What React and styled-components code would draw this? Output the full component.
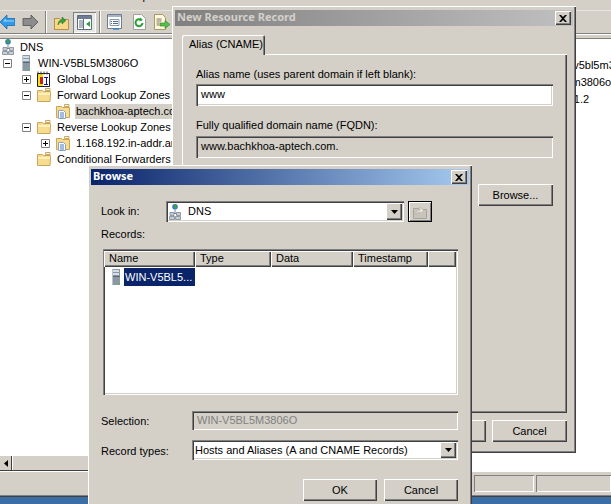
import React from "react";
import styled, { createGlobalStyle, css } from "styled-components";

const Global = createGlobalStyle`
  html, body { margin: 0; padding: 0; background: #d4d0c8; }
  * { box-sizing: border-box; }
`;

const raised = css`
  box-shadow: inset 1px 1px 0 #fff, inset -1px -1px 0 #404040, inset -2px -2px 0 #808080;
`;
const sunken = css`
  box-shadow: inset 1px 1px 0 #808080, inset 2px 2px 0 #404040, inset -1px -1px 0 #fff, inset -2px -2px 0 #d4d0c8;
`;

const Screen = styled.div`
  position: relative;
  width: 611px;
  height: 504px;
  overflow: hidden;
  background: #d4d0c8;
  color: #000;
  font: 11px/13px "Liberation Sans", Arial, sans-serif;
  display: flex;
  flex-direction: column;
`;

const MenuBar = styled.div`
  height: 5px;
  overflow: hidden;
  display: flex;
  align-items: flex-end;
  gap: 17px;
  padding-left: 3px;
  color: #000;
`;
const MenuItem = styled.span`
  flex: none;
  line-height: 16px;
  margin-bottom: 1px;
`;

const Toolbar = styled.div`
  height: 24px;
  margin-top: 5px;
  border-top: 1px solid #e8e6e0;
  border-bottom: 1px solid #808080;
  box-shadow: 0 1px 0 #fff;
  display: flex;
  align-items: center;
  position: relative;
`;
const ToolIcon = styled.svg`
  flex: none;
  display: block;
  margin-left: ${(p) => p.$ml}px;
`;
const ToolSep = styled.div`
  flex: none;
  width: 2px;
  height: 22px;
  margin-left: ${(p) => p.$ml}px;
  background: linear-gradient(90deg, #808080 50%, #fff 50%);
`;
const ToggleButton = styled.div`
  flex: none;
  width: 23px;
  height: 21px;
  margin-left: 4px;
  background: #e9e7e2;
  box-shadow: inset 1px 1px 0 #808080, inset -1px -1px 0 #fff;
  display: flex;
  align-items: center;
  justify-content: center;
`;

const Panes = styled.div`
  height: 433px;
  margin-top: 4px;
  background: #fff;
  box-shadow: inset 0 1px 0 #808080;
  display: flex;
  overflow: hidden;
`;
const TreePane = styled.div`
  width: 480px;
  flex: none;
  padding-top: 1px;
`;
const DetailPane = styled.div`
  flex: 1;
  padding-top: 19px;
  min-width: 0;
  overflow: hidden;
`;
const DetailRow = styled.div`
  height: 17px;
  line-height: 17px;
  white-space: nowrap;
  padding-left: ${(p) => p.$pad}px;
`;

const TreeRow = styled.div`
  height: 16px;
  display: flex;
  align-items: center;
  white-space: nowrap;
  padding-left: ${(p) => (p.$level < 0 ? 2 : 3 + p.$level * 19)}px;
`;
const ExpanderSlot = styled.span`
  flex: none;
  width: 9px;
  height: 9px;
  margin-right: 5px;
`;
const ExpanderBox = styled.svg`
  display: block;
`;
const NodeIcon = styled.svg`
  flex: none;
  display: block;
`;
const NodeLabel = styled.span`
  margin-left: ${(p) => (p.$level < 0 ? 1 : 4)}px;
  padding: 1px 1px;
  background: ${(p) => (p.$active ? "#d4d0c8" : "transparent")};
`;

const ScrollBar = styled.div`
  height: 16px;
  margin-top: -16px;
  position: relative;
  background: #d4d0c8;
  border-top: 1px solid #fff;
  border-bottom: 1px solid #404040;
  width: 88px;
  display: flex;
`;
const ScrollArrow = styled.div`
  width: 11px;
  flex: none;
  box-shadow: 1px 0 0 #404040, 2px 0 0 #fff;
  display: flex;
  align-items: center;
  justify-content: center;
`;

const StatusBar = styled.div`
  height: 24px;
  border-top: 1px solid #fff;
  padding-top: 3px;
  display: flex;
  gap: 2px;
  justify-content: flex-end;
  box-shadow: 0 1px 0 #808080;
`;
const StatusCell = styled.div`
  height: 17px;
  width: ${(p) => p.$w}px;
  flex: none;
  box-shadow: inset 1px 1px 0 #808080, inset -1px -1px 0 #fff;
`;
const Taskbar = styled.div`
  flex: 1;
  background: #3a6ea5;
  border-top: 1px solid #404040;
  margin-top: 1px;
`;

const Dialog = styled.div`
  position: absolute;
  left: ${(p) => p.$x}px;
  top: ${(p) => p.$y}px;
  width: ${(p) => p.$w}px;
  height: ${(p) => p.$h}px;
  background: #d4d0c8;
  padding: 4px 3px 3px;
  box-shadow: inset 1px 1px 0 #fff, inset -1px -1px 0 #404040, inset -2px -2px 0 #808080;
`;
const TitleBar = styled.div`
  height: 16px;
  padding: 0 2px;
  display: flex;
  align-items: center;
  justify-content: space-between;
  color: ${(p) => (p.$active ? "#fff" : "#d4d0c8")};
  font-family: "Noto Sans", Tahoma, sans-serif;
  font-weight: 700;
  font-size: 11px;
  background: ${(p) =>
    p.$active
      ? "linear-gradient(90deg, #0a246a, #a6caf0)"
      : "linear-gradient(90deg, #808080, #c0c0c0)"};
`;
const TitleText = styled.span`
  margin-bottom: 3px;
`;
const CloseButton = styled.div`
  width: 16px;
  height: 14px;
  background: #d4d0c8;
  ${raised}
  display: flex;
  align-items: center;
  justify-content: center;
`;

const RecordBody = styled.div`
  padding: 9px 6px 0 7px;
`;
const Tab = styled.div`
  width: 83px;
  height: 20px;
  padding: 3px 0 0 7px;
  position: relative;
  z-index: 1;
  background: #d4d0c8;
  box-shadow: inset 1px 1px 0 #fff, inset -1px 0 0 #404040, inset -2px 0 0 #808080;
  border-radius: 2px 2px 0 0;
  margin-bottom: -1px;
`;
const TabPanel = styled.div`
  height: 359px;
  padding: 14px 14px 0;
  ${raised}
  display: flex;
  flex-direction: column;
`;
const FieldLabel = styled.div`
  height: 13px;
  margin-top: ${(p) => p.$mt || 0}px;
  margin-bottom: ${(p) => p.$mb || 0}px;
`;
const TextBox = styled.div`
  height: 22px;
  padding: 0 5px 2px;
  display: flex;
  align-items: center;
  background: ${(p) => (p.$readonly ? "#d4d0c8" : "#fff")};
  ${sunken}
`;
const Button = styled.div`
  width: ${(p) => p.$w || 75}px;
  height: 22px;
  flex: none;
  background: #d4d0c8;
  ${raised}
  display: flex;
  align-items: center;
  justify-content: center;
`;
const BrowseRow = styled.div`
  margin-top: 26px;
  display: flex;
  justify-content: flex-end;
`;
const DialogButtons = styled.div`
  margin-top: ${(p) => p.$mt}px;
  display: flex;
  justify-content: flex-end;
  gap: ${(p) => p.$gap}px;
`;

const BrowseBody = styled.div`
  padding: 16px 11px 0 10px;
`;
const LookRow = styled.div`
  display: flex;
  align-items: center;
  height: 21px;
`;
const RowLabel = styled.div`
  width: ${(p) => p.$w}px;
  flex: none;
  padding-top: ${(p) => p.$pt || 0}px;
`;
const Combo = styled.div`
  flex: ${(p) => (p.$w ? "none" : "1")};
  width: ${(p) => (p.$w ? `${p.$w}px` : "auto")};
  height: ${(p) => p.$h}px;
  background: #fff;
  ${sunken}
  display: flex;
  align-items: center;
  padding: 2px 2px 2px 3px;
`;
const ComboText = styled.span`
  flex: 1;
  min-width: 0;
  display: flex;
  align-items: center;
  gap: 3px;
  white-space: nowrap;
`;
const ComboArrow = styled.div`
  width: 16px;
  align-self: stretch;
  flex: none;
  background: #d4d0c8;
  ${raised}
  display: flex;
  align-items: center;
  justify-content: center;
`;
const UpButton = styled.div`
  width: 24px;
  height: 21px;
  margin-left: 4px;
  flex: none;
  border: 1px solid #000;
  background: #d4d0c8;
  box-shadow: inset 1px 1px 0 #fff, inset -1px -1px 0 #808080;
  display: flex;
  align-items: center;
  justify-content: center;
`;
const RecordsLabel = styled.div`
  height: 13px;
  margin: 6px 0 8px;
`;
const ListView = styled.div`
  margin-left: 2px;
  height: 146px;
  background: #fff;
  padding: 2px 2px 0 1px;
  ${sunken}
`;
const ListHeader = styled.div`
  height: 16px;
  display: flex;
`;
const HeaderCell = styled.div`
  flex: ${(p) => (p.$w ? "none" : "1")};
  width: ${(p) => (p.$w ? `${p.$w}px` : "auto")};
  padding: 1px 0 0 5px;
  background: #d4d0c8;
  ${raised}
`;
const ListRow = styled.div`
  height: 18px;
  margin-top: 1px;
  display: flex;
  align-items: center;
  padding-left: 3px;
`;
const RowIconSlot = styled.span`
  width: 17px;
  flex: none;
`;
const SelectedName = styled.span`
  width: 71px;
  height: 18px;
  line-height: 18px;
  padding-left: 1px;
  background: #0a246a;
  color: #fff;
  white-space: nowrap;
  overflow: hidden;
`;
const FormRow = styled.div`
  display: flex;
  align-items: center;
  margin-top: ${(p) => p.$mt}px;
`;
const SelectionBox = styled.div`
  flex: 1;
  height: 19px;
  padding: 0 5px;
  display: flex;
  align-items: center;
  color: #808080;
  ${sunken}
`;

const Folder = () => (
  <NodeIcon width="16" height="16" viewBox="0 0 16 16">
    <path d="M1.500 3.500h5l1 1h7v1l-.5 9h-12.500z" fill="#f7dc8f" stroke="#c9a65a" />
    <path d="M2 6h12v2H2z" fill="#fdf0bd" />
    <path d="M9.500 1.500h4.500v2h-4.500z" fill="#fff" stroke="#c9a65a" />
  </NodeIcon>
);
const Zone = () => (
  <NodeIcon width="16" height="16" viewBox="0 0 16 16">
    <path d="M1.500 3.500h5l1 1h7v10h-13z" fill="#f7dc8f" stroke="#c9a65a" />
    <path d="M9.500 1.500h4.500v2h-4.500z" fill="#fff" stroke="#c9a65a" />
    <path d="M3.500 7.500h5l2 2v6h-7z" fill="#fff" stroke="#8aa4c8" />
    <path d="M5 10h4M5 12h4M5 14h4" stroke="#4a78b8" />
  </NodeIcon>
);
const Server = () => (
  <NodeIcon width="16" height="16" viewBox="-1 0 16 16">
    <path d="M4 0h8v16H4z" fill="#8c98a4" />
    <path d="M5 1h6v2H5zM5 4h6v2H5z" fill="#d4dce4" />
    <path d="M4 7h8v1H4z" fill="#5c6874" />
    <path d="M4 0h1v16H4z" fill="#b8c4d0" />
    <path d="M10 14h2v1h-2z" fill="#48c048" />
  </NodeIcon>
);
const DnsIcon = () => (
  <NodeIcon width="16" height="16" viewBox="0 0 16 16">
    <circle cx="6" cy="2.800" r="2.800" fill="#2f7fc0" />
    <path d="M4 1.500l3-1 1 2-2 2z" fill="#46a040" />
    <path d="M5.500 5.500h1v4h-1zM2 9h8v1H2z" fill="#7c8894" />
    <path d="M1 8.500h4v3H1zM7.500 8.500h4v3h-4zM.5 12.500h5v3h-5zM6.500 12.500h5v3h-5z" fill="#c8ccd4" stroke="#7c8894" strokeWidth=".8" />
  </NodeIcon>
);
const Logs = () => (
  <NodeIcon width="16" height="16" viewBox="0 0 16 16">
    <path d="M1.500 2.500h12v13h-12z" fill="#fff" stroke="#202020" />
    <path d="M2 3h5v12H2z" fill="#f8e020" />
    <path d="M4 6h3v7H4z" fill="#c02020" />
    <path d="M8 6h4v1H8zM10 7h1v6h-1zM8 13h4v1H8z" fill="#1010a0" />
    <path d="M2 .5v3M5 .5v3M8 .5v3M11 .5v3" stroke="#404040" />
  </NodeIcon>
);

const Expander = ({ open }) => (
  <ExpanderSlot>
    <ExpanderBox width="9" height="9" viewBox="0 0 9 9">
      <path d="M.5.500h8v8h-8z" fill="#fff" stroke="#808080" />
      <path d={open ? "M2 4.500h5" : "M2 4.500h5M4.500 2v5"} stroke="#000" />
    </ExpanderBox>
  </ExpanderSlot>
);

const Node = ({ level, open, leaf, icon, active, children }) => (
  <TreeRow $level={level}>
    {level >= 0 && (leaf ? <ExpanderSlot /> : <Expander open={open} />)}
    {icon}
    <NodeLabel $level={level} $active={active}>{children}</NodeLabel>
  </TreeRow>
);

const X = () => (
  <svg width="8" height="7" viewBox="0 0 8 7">
    <path d="M0 0h2l2 2 2-2h2L5 3.500 8 7H6L4 5 2 7H0l3-3.500z" fill="#000" />
  </svg>
);
const Down = () => (
  <svg width="7" height="4" viewBox="0 0 7 4">
    <path d="M0 0h7L3.500 4z" fill="#000" />
  </svg>
);

const App = () => (
  <Screen>
    <Global />
    <MenuBar>
      <MenuItem>File</MenuItem>
      <MenuItem>Action</MenuItem>
      <MenuItem>View</MenuItem>
      <MenuItem>Help</MenuItem>
    </MenuBar>
    <Toolbar>
      <ToolIcon $ml={0} width="15" height="14" viewBox="0 0 15 14">
        <path d="M0 7l7-7v3.500h8v7H7V14z" fill="#2f9be8" stroke="#1a5fa8" strokeWidth=".7" />
        <path d="M3 6.500l3-3v2h8v1H3z" fill="#9ad6ff" />
      </ToolIcon>
      <ToolIcon $ml={7} width="16" height="14" viewBox="0 0 16 14">
        <path d="M16 7L9 0v3.500H1v7h8V14z" fill="#8c8c8c" stroke="#505050" strokeWidth=".8" />
      </ToolIcon>
      <ToolSep $ml={7} />
      <ToolIcon $ml={7} width="15" height="16" viewBox="0 0 15 16">
        <path d="M.500 4.500h5l1 1h8v10h-14z" fill="#f7d88a" stroke="#b89040" />
        <path d="M4 11c0-4 2-5 4-5V3l4 3.500L8 10V8C6 8 5 9 4 11z" fill="#3aa040" stroke="#207028" strokeWidth=".5" />
      </ToolIcon>
      <ToggleButton>
        <svg width="15" height="15" viewBox="0 0 15 15">
          <path d="M.500.500h14v14H.500z" fill="#fff" stroke="#5a6a80" />
          <path d="M1 1h13v3H1z" fill="#6c7c94" />
          <path d="M2 6h4M2 8h4M2 10h4M2 12h4" stroke="#5a6a80" />
          <path d="M6.500 4v11" stroke="#5a6a80" />
          <path d="M13 6v6L9 9z" fill="#30a040" />
        </svg>
      </ToggleButton>
      <ToolSep $ml={3} />
      <ToolIcon $ml={6} width="15" height="16" viewBox="0 0 15 16">
        <path d="M.500.500h14v14H.500z" fill="#fff" stroke="#6c7c94" />
        <path d="M1 1h13v2H1z" fill="#a8b4c4" />
        <path d="M3 5.500h9v6H3z" fill="#fff" stroke="#8c98a8" />
        <path d="M6 7.500h5M6 9.500h5M4 7.500h1M4 9.500h1" stroke="#4a6a98" />
        <path d="M6 15h6v1H6z" fill="#30a8e8" />
      </ToolIcon>
      <ToolIcon $ml={10} width="14" height="16" viewBox="0 0 14 16">
        <path d="M1.500.500h8l4 4v11h-12z" fill="#fff" stroke="#a0a0a0" />
        <path d="M10.500 9a3.500 3.500 0 1 1-1.200-3" fill="none" stroke="#28a038" strokeWidth="2" />
        <path d="M8 3.500l3 2.500-3.500 1.500z" fill="#28a038" />
      </ToolIcon>
      <ToolIcon $ml={8} width="16" height="16" viewBox="0 0 16 16">
        <path d="M.500.500h8l3 3v12h-11z" fill="#fff8dc" stroke="#a89868" />
        <path d="M2.500 5h5M2.500 7h5M2.500 9h3M2.500 11h3" stroke="#7c7460" />
        <path d="M6 9h5V6.500l5 4-5 4V12H6z" fill="#58c048" stroke="#2c8028" strokeWidth=".6" />
      </ToolIcon>
    </Toolbar>
    <Panes>
      <TreePane>
        <Node level={-1} icon={<DnsIcon />}>DNS</Node>
        <Node level={0} open icon={<Server />}>WIN-V5BL5M3806O</Node>
        <Node level={1} icon={<Logs />}>Global Logs</Node>
        <Node level={1} open icon={<Folder />}>Forward Lookup Zones</Node>
        <Node level={2} leaf active icon={<Zone />}>bachkhoa-aptech.com</Node>
        <Node level={1} open icon={<Folder />}>Reverse Lookup Zones</Node>
        <Node level={2} icon={<Zone />}>1.168.192.in-addr.arpa</Node>
        <Node level={1} leaf icon={<Folder />}>Conditional Forwarders</Node>
      </TreePane>
      <DetailPane>
        <DetailRow $pad={73}>win-v5bl5m3806o.</DetailRow>
        <DetailRow $pad={45}>win-v5bl5m3806o.</DetailRow>
        <DetailRow $pad={51}>192.168.1.2</DetailRow>
      </DetailPane>
    </Panes>
    <ScrollBar>
      <ScrollArrow>
        <svg width="4" height="7" viewBox="0 0 4 7"><path d="M4 0v7L0 3.500z" fill="#000" /></svg>
      </ScrollArrow>
    </ScrollBar>
    <StatusBar>
      <StatusCell $w={60} />
      <StatusCell $w={75} />
    </StatusBar>
    <Taskbar />

    <Dialog $x={172} $y={6} $w={404} $h={447}>
      <TitleBar>
        <TitleText>New Resource Record</TitleText>
        <CloseButton><X /></CloseButton>
      </TitleBar>
      <RecordBody>
        <Tab>Alias (CNAME)</Tab>
        <TabPanel>
          <FieldLabel $mb={3}>Alias name (uses parent domain if left blank):</FieldLabel>
          <TextBox>www</TextBox>
          <FieldLabel $mt={13} $mb={4}>Fully qualified domain name (FQDN):</FieldLabel>
          <TextBox $readonly>www.bachkhoa-aptech.com.</TextBox>
          <BrowseRow><Button>Browse...</Button></BrowseRow>
        </TabPanel>
        <DialogButtons $mt={7} $gap={6}>
          <Button>OK</Button>
          <Button>Cancel</Button>
        </DialogButtons>
      </RecordBody>
    </Dialog>

    <Dialog $x={88} $y={165} $w={384} $h={345}>
      <TitleBar $active>
        <TitleText>Browse</TitleText>
        <CloseButton><X /></CloseButton>
      </TitleBar>
      <BrowseBody>
        <LookRow>
          <RowLabel $w={65}>Look in:</RowLabel>
          <Combo $w={238} $h={21}>
            <ComboText><DnsIcon />DNS</ComboText>
            <ComboArrow><Down /></ComboArrow>
          </Combo>
          <UpButton>
            <svg width="16" height="14" viewBox="0 0 16 14">
              <path d="M1.500 3.500h5l1 1h7v9h-13z" fill="#c8c4bc" stroke="#a8a49c" />
              <path d="M4 10c0-4 2-5 4-5V2l4 3.500L8 9V7C6 7 5 8 4 10z" fill="#e8e6e0" stroke="#a8a49c" strokeWidth=".5" />
            </svg>
          </UpButton>
        </LookRow>
        <RecordsLabel>Records:</RecordsLabel>
        <ListView>
          <ListHeader>
            <HeaderCell $w={91}>Name</HeaderCell>
            <HeaderCell $w={76}>Type</HeaderCell>
            <HeaderCell $w={82}>Data</HeaderCell>
            <HeaderCell $w={75}>Timestamp</HeaderCell>
            <HeaderCell />
          </ListHeader>
          <ListRow>
            <RowIconSlot><Server /></RowIconSlot>
            <SelectedName>WIN-V5BL5...</SelectedName>
          </ListRow>
        </ListView>
        <FormRow $mt={16}>
          <RowLabel $w={91} $pt={2}>Selection:</RowLabel>
          <SelectionBox>WIN-V5BL5M3806O</SelectionBox>
        </FormRow>
        <FormRow $mt={10}>
          <RowLabel $w={91} $pt={2}>Record types:</RowLabel>
          <Combo $h={20}>
            <ComboText>Hosts and Aliases (A and CNAME Records)</ComboText>
            <ComboArrow><Down /></ComboArrow>
          </Combo>
        </FormRow>
        <DialogButtons $mt={19} $gap={7}>
          <Button $w={74}>OK</Button>
          <Button $w={74}>Cancel</Button>
        </DialogButtons>
      </BrowseBody>
    </Dialog>
  </Screen>
);

export default App;
